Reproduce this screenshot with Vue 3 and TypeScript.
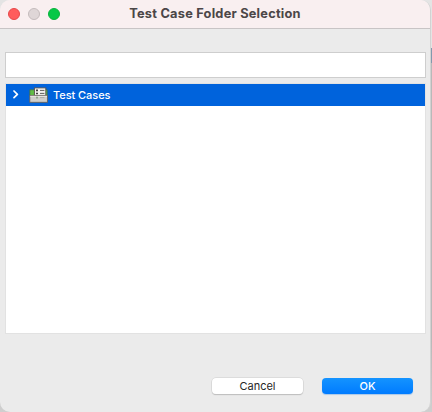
<script setup lang="ts">
import { ref } from 'vue'

const title = 'Test Case Folder Selection'
const filter = ref('')
const folders = ref<string[]>(['Test Cases'])
</script>

<template>
  <div class="desktop">
    <main class="window">
      <header class="titlebar">
        <div class="lights">
          <span class="light close"></span>
          <span class="light minimize"></span>
          <span class="light zoom"></span>
        </div>
        <h1 class="title">{{ title }}</h1>
      </header>
      <section class="content">
        <input v-model="filter" class="filter" type="text" />
        <div class="tree">
          <div v-for="folder in folders" :key="folder" class="row">
            <svg class="chevron" width="6" height="9" viewBox="0 0 6 9">
              <path d="M1 1 L4.4 4.3 L1 7.6" fill="none" stroke="#fff" stroke-width="1.7" stroke-linecap="round" stroke-linejoin="round" />
            </svg>
            <svg class="folder" width="19" height="16" viewBox="0 0 19 16">
              <path d="M0.8 2.8H6V9H0.8ZM15 2.8H18.2V9H15Z" fill="#62bd45" stroke="#3f6b55" stroke-width="0.8" />
              <rect x="5.4" y="0.9" width="11.4" height="8" fill="#f3f2ee" stroke="#55504c" stroke-width="0.9" />
              <path d="M7 2.4h2v1.8H7zM7 5.8h2v1.4H7z" fill="#45423f" />
              <path d="M11 3.4h4.4M11 6.4h4.4" stroke="#4e4c49" stroke-width="0.9" />
              <rect x="0.8" y="8.4" width="17.6" height="6.9" fill="#cfcecb" stroke="#66615b" stroke-width="0.9" />
              <path d="M1.2 9.3h16.8" stroke="#e9e8e4" />
              <path d="M7 9.8h2v1.6H7z" fill="#91a88b" />
              <path d="M11 10.6h4.4" stroke="#aaa9a4" stroke-width="0.9" />
            </svg>
            <span class="label">{{ folder }}</span>
          </div>
        </div>
        <footer class="actions">
          <button class="button" type="button">Cancel</button>
          <button class="button primary" type="button">OK</button>
        </footer>
      </section>
    </main>
  </div>
</template>

<style>
body {
  margin: 0;
}
</style>

<style scoped>
.desktop {
  box-sizing: border-box;
  width: 432px;
  height: 412px;
  padding-right: 1px;
  overflow: hidden;
  background: linear-gradient(#e4e4e4 0 48px, #8299ad 48px 63px, #b9b9b9 63px 340px, #cfcfcf 412px);
  font-family: Inter, "Liberation Sans", sans-serif;
}
.window {
  box-sizing: border-box;
  display: flex;
  flex-direction: column;
  width: 431px;
  height: 412px;
  overflow: hidden;
  border-right: 1px solid #d2d2d2;
  border-radius: 10px;
  background: #ebebeb;
}
.titlebar {
  box-sizing: border-box;
  display: grid;
  grid-template-columns: 60px 1fr 60px;
  align-items: center;
  height: 29px;
  flex: none;
  border-bottom: 1px solid #c8c4c5;
  background: #f9eff0;
}
.lights {
  display: flex;
  gap: 8px;
  padding-left: 8px;
}
.light {
  box-sizing: border-box;
  flex: none;
  width: 12px;
  height: 12px;
  border: 1px solid #e6484a;
  border-radius: 50%;
  background: #ff5c5c;
}
.minimize {
  border-color: #c4bbbc;
  background: #dfd6d7;
}
.zoom {
  border-color: #0ab33c;
  background: #05c847;
}
.title {
  margin: 0;
  color: #4b4647;
  font-size: 12.8px;
  font-weight: 700;
  letter-spacing: 0.22px;
  line-height: 28px;
  text-align: center;
  white-space: nowrap;
}
.content {
  display: flex;
  flex: 1;
  flex-direction: column;
  padding: 23px 4px 0 5px;
}
.filter {
  box-sizing: border-box;
  width: 421px;
  height: 26px;
  margin: 0;
  padding: 0 5px;
  border: 1px solid #cecece;
  border-radius: 0;
  outline: 0;
  background: #fff;
}
.tree {
  box-sizing: border-box;
  width: 421px;
  height: 251px;
  margin-top: 5px;
  border: 1px solid #e2e2e2;
  background: #fff;
}
.row {
  display: flex;
  align-items: center;
  height: 22px;
  padding-left: 7px;
  background: #0063dc;
  color: #fff;
}
.chevron {
  margin-top: -1px;
}
.folder {
  margin-left: 10px;
}
.label {
  margin-left: 5px;
  font-size: 11px;
  font-weight: 500;
  letter-spacing: -0.06px;
  line-height: 22px;
}
.actions {
  display: flex;
  gap: 19px;
  justify-content: flex-end;
  padding: 44px 13px 0 0;
}
.button {
  width: 91px;
  height: 16px;
  padding: 0;
  border: 0;
  border-radius: 4px;
  background: #fff;
  box-shadow: 0 0 0 0.5px #cdcdcd, 0 1px 1px #b0b0b0;
  color: #262626;
  font-family: inherit;
  font-size: 11px;
  font-weight: 400;
  line-height: 16px;
}
.primary {
  background: linear-gradient(#1493ff, #007bff);
  box-shadow: 0 1px 1px #a9c8e8;
  color: #fff;
  font-weight: 500;
}
</style>
